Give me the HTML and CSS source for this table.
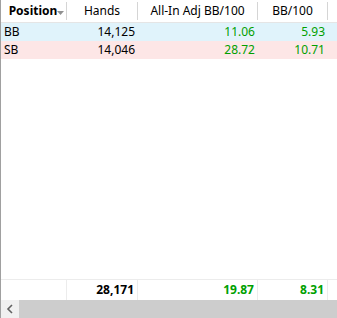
FILE: index.html
```html
<!DOCTYPE html>
<html>
<head>
<meta charset="utf-8">
<link rel="stylesheet" href="styles.css">
</head>
<body>
<div class="grid">
  <div class="hdr">
    <div class="hc first"><span class="bold">Position</span><svg class="sort" width="7" height="4" viewBox="0 0 7 4"><path d="M0 0 H7 L3.5 4 Z" fill="#909090"/></svg></div>
    <div class="hc">Hands</div>
    <div class="hc">All-In Adj BB/100</div>
    <div class="hc">BB/100</div>
    <div class="hc last"></div>
  </div>
  <div class="row bb">
    <div class="c l">BB</div>
    <div class="c">14,125</div>
    <div class="c g">11.06</div>
    <div class="c g">5.93</div>
    <div class="c"></div>
  </div>
  <div class="row sb">
    <div class="c l">SB</div>
    <div class="c">14,046</div>
    <div class="c g">28.72</div>
    <div class="c g">10.71</div>
    <div class="c"></div>
  </div>
  <div class="space"></div>
  <div class="foot">
    <div class="fc"></div>
    <div class="fc">28,171</div>
    <div class="fc g">19.87</div>
    <div class="fc g">8.31</div>
    <div class="fc end"></div>
  </div>
  <div class="scroll">
    <div class="btn"><svg width="8" height="10" viewBox="0 0 8 10"><path d="M6 1 L2 5 L6 9" fill="none" stroke="#606060" stroke-width="1.6"/></svg></div>
    <div class="thumb"></div>
  </div>
</div>
</body>
</html>
```

FILE: styles.css
```css
* { box-sizing: border-box; }
html, body { margin: 0; padding: 0; background: #fff; }
body { width: 337px; height: 318px; overflow: hidden; font-family: "Noto Sans", "Open Sans", sans-serif; font-size: 12px; color: #000; }
.grid { height: 318px; display: flex; flex-direction: column; border-left: 1px solid #a0a0a0; }
.hdr, .row, .foot { display: grid; grid-template-columns: 66px 71px 120px 70px 1fr; }
.hdr { height: 23px; border-bottom: 1px solid #e5e5e5; }
.hc { display: flex; align-items: center; justify-content: center; border-right: 1px solid #d5d5d5; margin: 2px 0 2px; line-height: 18px; }
.hc.last { border-right: none; }
.hc.first { padding-left: 6px; }
.bold { font-weight: bold; }
.sort { margin-left: 0; position: relative; top: 2px; }
.row { height: 18px; }
.row.bb { background: #e0f3fb; }
.row.sb { background: #fde6e6; }
.c { text-align: right; padding-right: 3px; line-height: 18px; }
.c.l { text-align: left; padding-left: 3px; }
.g { color: #00a000; }
.space { flex: 1; }
.foot { height: 21px; border-top: 1px solid #ececec; font-weight: bold; }
.fc { border-right: 1px solid #ececec; text-align: right; padding-right: 3px; line-height: 20px; }
.fc.end { border-right: none; }
.scroll { height: 18px; display: flex; background: #cdcdcd; }
.btn { width: 18px; background: #f0f0f0; display: flex; align-items: center; justify-content: center; }
.thumb { flex: 1; }
```
